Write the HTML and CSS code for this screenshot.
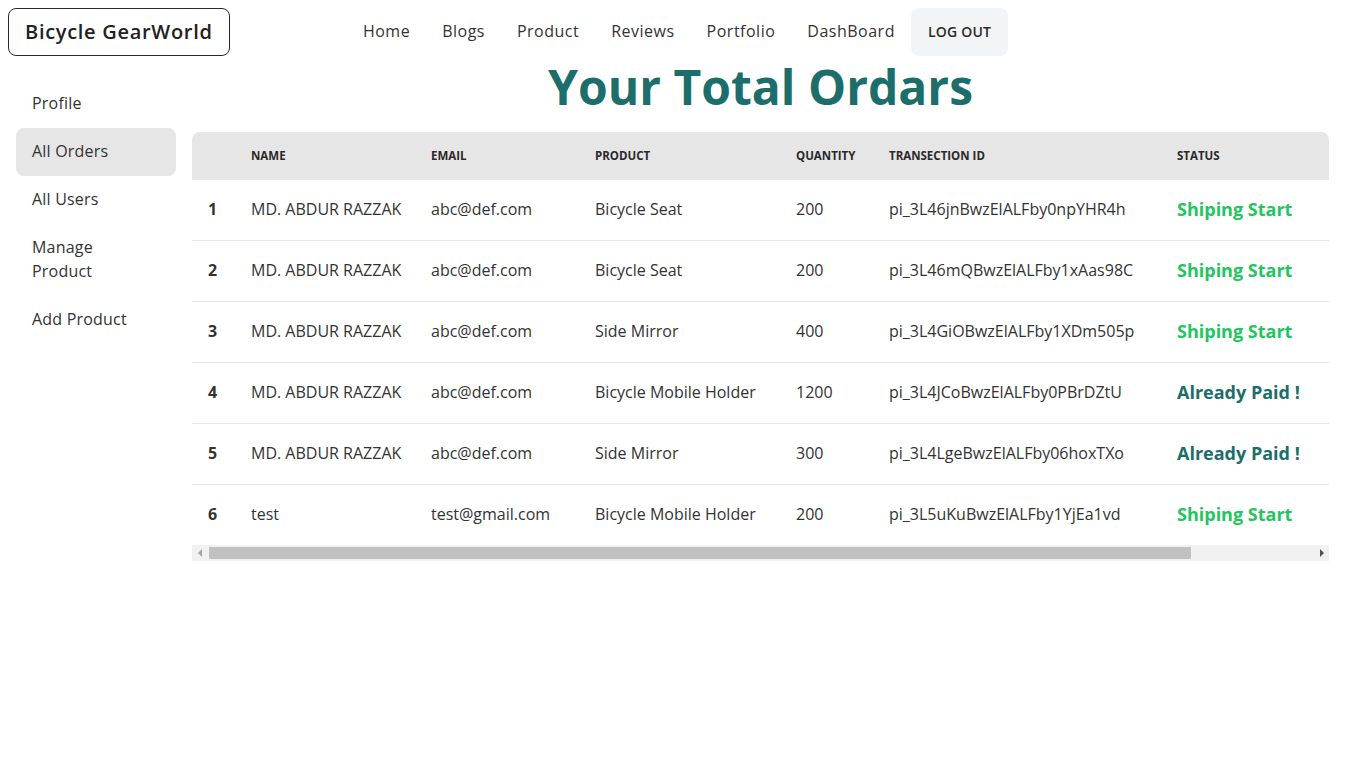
FILE: index.html
```html
<!DOCTYPE html>
<html lang="en">
<head>
<meta charset="utf-8">
<title>Bicycle GearWorld - Dashboard</title>
<link rel="stylesheet" href="styles.css">
</head>
<body>
<header class="navbar">
  <div class="navbar-start">
    <a class="brand" href="#">Bicycle GearWorld</a>
  </div>
  <nav class="navbar-center">
    <a class="nav-link" href="#">Home</a>
    <a class="nav-link" href="#">Blogs</a>
    <a class="nav-link" href="#">Product</a>
    <a class="nav-link" href="#">Reviews</a>
    <a class="nav-link" href="#">Portfolio</a>
    <a class="nav-link" href="#">DashBoard</a>
    <button class="logout">LOG OUT</button>
  </nav>
  <div class="navbar-end"></div>
</header>
<div class="drawer">
  <aside class="sidebar">
    <a class="side-item" href="#">Profile</a>
    <a class="side-item active" href="#">All Orders</a>
    <a class="side-item" href="#">All Users</a>
    <a class="side-item" href="#">Manage Product</a>
    <a class="side-item" href="#">Add Product</a>
  </aside>
  <main class="content">
    <h1 class="title">Your Total Ordars</h1>
    <div class="table-wrap">
      <table class="orders">
        <colgroup>
          <col class="c-idx"><col class="c-name"><col class="c-email"><col class="c-product"><col class="c-qty"><col class="c-tid"><col class="c-status"><col class="c-extra">
        </colgroup>
        <thead>
          <tr><th></th><th>Name</th><th>Email</th><th>Product</th><th>Quantity</th><th>Transection ID</th><th>Status</th><th></th></tr>
        </thead>
        <tbody>
          <tr><th>1</th><td>MD. ABDUR RAZZAK</td><td>abc@def.com</td><td>Bicycle Seat</td><td>200</td><td>pi_3L46jnBwzElALFby0npYHR4h</td><td class="st shipping">Shiping Start</td><td></td></tr>
          <tr><th>2</th><td>MD. ABDUR RAZZAK</td><td>abc@def.com</td><td>Bicycle Seat</td><td>200</td><td>pi_3L46mQBwzElALFby1xAas98C</td><td class="st shipping">Shiping Start</td><td></td></tr>
          <tr><th>3</th><td>MD. ABDUR RAZZAK</td><td>abc@def.com</td><td>Side Mirror</td><td>400</td><td>pi_3L4GiOBwzElALFby1XDm505p</td><td class="st shipping">Shiping Start</td><td></td></tr>
          <tr><th>4</th><td>MD. ABDUR RAZZAK</td><td>abc@def.com</td><td>Bicycle Mobile Holder</td><td>1200</td><td>pi_3L4JCoBwzElALFby0PBrDZtU</td><td class="st paid">Already Paid !</td><td></td></tr>
          <tr><th>5</th><td>MD. ABDUR RAZZAK</td><td>abc@def.com</td><td>Side Mirror</td><td>300</td><td>pi_3L4LgeBwzElALFby06hoxTXo</td><td class="st paid">Already Paid !</td><td></td></tr>
          <tr><th>6</th><td>test</td><td>test@gmail.com</td><td>Bicycle Mobile Holder</td><td>200</td><td>pi_3L5uKuBwzElALFby1YjEa1vd</td><td class="st shipping">Shiping Start</td><td></td></tr>
        </tbody>
      </table>
    </div>
    <div class="hscroll" aria-hidden="true">
      <span class="hs-btn"><span class="arrow-left"></span></span>
      <span class="hs-track"><span class="hs-thumb"></span></span>
      <span class="hs-btn"><span class="arrow-right"></span></span>
    </div>
  </main>
</div>
</body>
</html>
```

FILE: styles.css
```css
* { box-sizing: border-box; }
html, body { margin: 0; padding: 0; }
body {
  font-family: "Open Sans", "Noto Sans", sans-serif;
  color: #333333;
  background: #ffffff;
  font-size: 16px;
}
a { color: inherit; text-decoration: none; }

.navbar {
  display: grid;
  grid-template-columns: 1fr auto 1fr;
  align-items: center;
  padding: 8px;
  min-height: 64px;
}
.navbar-start { display: flex; }
.brand {
  display: inline-flex;
  align-items: center;
  height: 48px;
  padding: 0 16px 1px;
  border: 1px solid #2b2b2b;
  border-radius: 8px;
  font-size: 20px;
  font-weight: 600;
  letter-spacing: 0.7px;
  color: #222;
}
.navbar-center { display: flex; align-items: center; }
.nav-link {
  display: flex;
  align-items: center;
  height: 48px;
  padding: 0 16px 2px;
  font-size: 16px;
  letter-spacing: 0.5px;
  color: #333;
}
.logout {
  height: 48px;
  padding: 0 17px 1px;
  border: none;
  border-radius: 8px;
  background: #f3f4f6;
  font-family: inherit;
  font-size: 14px;
  font-weight: 600;
  letter-spacing: 0.2px;
  color: #2a2a2a;
}

.drawer { display: flex; align-items: flex-start; }
.sidebar {
  flex: 0 0 192px;
  display: flex;
  flex-direction: column;
  padding: 16px;
}
.side-item {
  padding: 11px 40px 13px 16px;
  line-height: 24px;
  border-radius: 8px;
  font-size: 16px;
  letter-spacing: 0.2px;
  color: #333;
}
.side-item.active { background: #e6e6e6; }

.content {
  flex: 1;
  min-width: 0;
  padding-right: 26px;
}
.title {
  margin: 0 0 23px;
  text-align: center;
  font-size: 48px;
  line-height: 45px;
  font-weight: 700;
  color: #1b6e6a;
}
.table-wrap {
  overflow: hidden;
  border-radius: 8px 8px 0 0;
}
.orders {
  border-collapse: collapse;
  table-layout: fixed;
  width: 1278px;
}
.c-idx { width: 43px; }
.c-name { width: 180px; }
.c-email { width: 164px; }
.c-product { width: 201px; }
.c-qty { width: 93px; }
.c-tid { width: 288px; }
.c-status { width: 160px; }
.c-extra { width: 149px; }

.orders thead th {
  background: #e6e6e6;
  height: 48px;
  padding: 0 16px 1px;
  text-align: left;
  font-size: 11.5px;
  font-weight: 700;
  text-transform: uppercase;
  color: #2a2a2a;
  white-space: nowrap;
}
.orders tbody th,
.orders tbody td {
  height: 61px;
  padding: 0 16px 2px;
  text-align: left;
  white-space: nowrap;
  border-top: 1px solid #e6e6e6;
  font-size: 16px;
  font-weight: 400;
  color: #333;
}
.orders tbody tr:first-child th,
.orders tbody tr:first-child td { border-top: none; height: 60px; }
.orders tbody th { font-weight: 700; }
.orders tbody td.st { font-size: 18px; font-weight: 700; }
.st.shipping { color: #22c55e; }
.st.paid { color: #1b6e6a; }

.hscroll {
  display: flex;
  height: 16px;
  background: #f1f1f1;
}
.hs-btn {
  flex: 0 0 15px;
  display: flex;
  align-items: center;
  justify-content: center;
}
.arrow-left {
  width: 0; height: 0;
  border-top: 4px solid transparent;
  border-bottom: 4px solid transparent;
  border-right: 4px solid #a3a3a3;
}
.arrow-right {
  width: 0; height: 0;
  border-top: 4px solid transparent;
  border-bottom: 4px solid transparent;
  border-left: 4px solid #505050;
}
.hs-track {
  flex: 1;
  display: flex;
  align-items: center;
  padding-left: 2px;
}
.hs-thumb {
  display: block;
  width: 982px;
  height: 12px;
  background: #c1c1c1;
}
```
